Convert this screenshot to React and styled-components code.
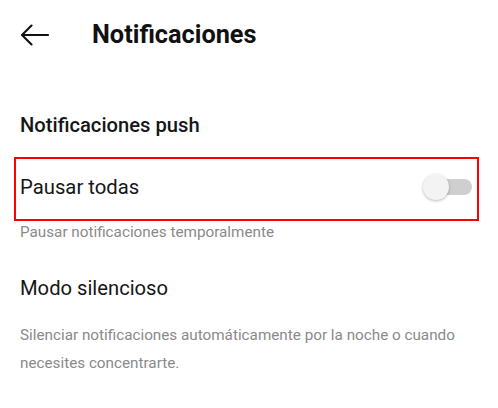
import React from "react";
import styled, { createGlobalStyle } from "styled-components";

const Global = createGlobalStyle`
  body {
    margin: 0;
    background: #fff;
    font-family: Roboto, "Noto Sans", sans-serif;
  }
`;

const Page = styled.div`
  width: 498px;
  height: 408px;
  background: #fff;
  overflow: hidden;
`;

const Header = styled.header`
  height: 70px;
  display: flex;
  align-items: center;
  padding-left: 20px;
  gap: 43px;
`;

const Title = styled.h1`
  margin: 0;
  font-size: 25.3px;
  line-height: 30px;
  font-weight: 700;
  color: #111;
`;

const SectionTitle = styled.h2`
  margin: ${(p) => p.$top}px 0 0 20px;
  font-size: 20.2px;
  line-height: 24px;
  font-weight: ${(p) => (p.$bold ? 500 : 400)};
  color: #161616;
`;

const Highlight = styled.div`
  margin: 20px 19px 0 14px;
  height: 64px;
  box-sizing: border-box;
  border: 2.5px solid #ff0000;
  display: flex;
  align-items: center;
  justify-content: space-between;
  padding: 0 5px 0 4px;
`;

const RowLabel = styled.span`
  font-size: 20.3px;
  line-height: 24px;
  color: #161616;
  margin-top: -4px;
`;

const Track = styled.div`
  position: relative;
  width: 48px;
  height: 16px;
  border-radius: 8px;
  background: #cfcfcf;
  margin-top: -4px;
`;

const Knob = styled.div`
  position: absolute;
  left: -1px;
  top: -5px;
  width: 26px;
  height: 26px;
  border-radius: 50%;
  background: #f3f3f3;
  box-shadow: 0 1px 3px rgba(0, 0, 0, 0.28);
`;

const Hint = styled.p`
  margin: ${(p) => p.$top}px 0 0 20px;
  padding-right: 30px;
  font-size: 15.25px;
  line-height: ${(p) => p.$lh}px;
  color: #8a8a8a;
`;

function BackArrow() {
  return (
    <svg width="29" height="22" viewBox="0 0 29 22" fill="none">
      <path
        d="M28 11H2.5M11.5 1.5L2 11l9.5 9.5"
        stroke="#111"
        strokeWidth="2.1"
        strokeLinecap="round"
        strokeLinejoin="round"
      />
    </svg>
  );
}

export default function App() {
  return (
    <Page>
      <Global />
      <Header>
        <BackArrow />
        <Title>Notificaciones</Title>
      </Header>
      <SectionTitle $top={43} $bold>
        Notificaciones push
      </SectionTitle>
      <Highlight>
        <RowLabel>Pausar todas</RowLabel>
        <Track>
          <Knob />
        </Track>
      </Highlight>
      <Hint $top={1} $lh={20}>
        Pausar notificaciones temporalmente
      </Hint>
      <SectionTitle $top={34}>Modo silencioso</SectionTitle>
      <Hint $top={21} $lh={28}>
        Silenciar notificaciones automáticamente por la noche o cuando necesites concentrarte.
      </Hint>
    </Page>
  );
}
